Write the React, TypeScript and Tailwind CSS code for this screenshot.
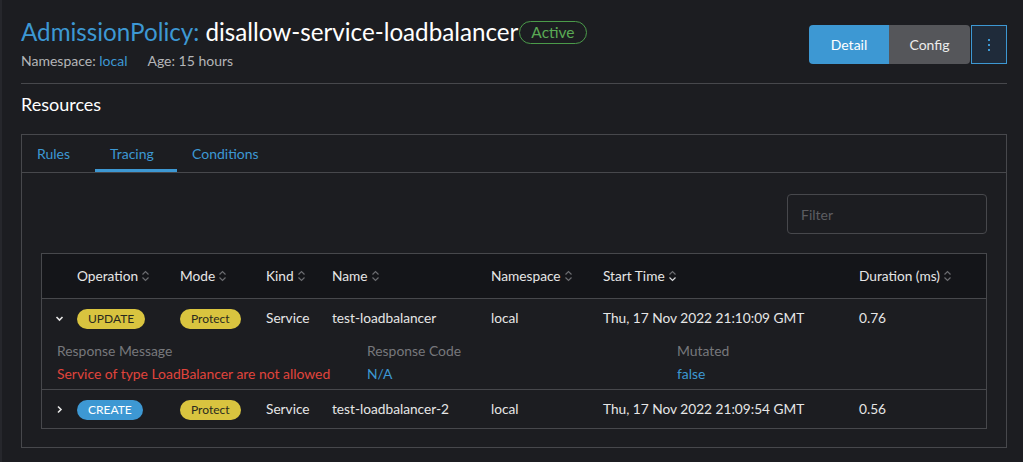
import type { ReactNode } from 'react'

const COLS = 'grid grid-cols-[35px_103px_86px_66px_159px_112px_256px_1fr] items-center'

function SortIcon({ active }: { active?: boolean }) {
  return (
    <svg width="9" height="12" viewBox="0 0 9 12" className="ml-[3px] inline-block" fill="none" strokeWidth="1.2">
      <path d="M1.5 4.5 L4.5 1.5 L7.5 4.5" stroke="#6b6c70" />
      <path d="M1.5 7.5 L4.5 10.5 L7.5 7.5" stroke={active ? '#d8d9db' : '#6b6c70'} />
    </svg>
  )
}

function Th({ children, active }: { children: ReactNode; active?: boolean }) {
  return (
    <div className="flex items-center text-[13.7px] text-[#e6e6e6]">
      {children}
      <SortIcon active={active} />
    </div>
  )
}

function Badge({ children, tone }: { children: ReactNode; tone: 'yellow' | 'blue' }) {
  return (
    <span
      className={
        tone === 'yellow'
          ? 'inline-flex h-[20px] items-center rounded-full bg-[#d9c43f] px-[11px] text-[12px] text-[#2a2a1e]'
          : 'inline-flex h-[20px] items-center rounded-full bg-[#3d98d3] px-[11px] text-[12px] text-white'
      }
    >
      {children}
    </span>
  )
}

function Chevron({ open }: { open?: boolean }) {
  return (
    <svg width="9" height="9" viewBox="0 0 9 9" fill="none" stroke="#e6e6e6" strokeWidth="1.6" className="ml-[13px]">
      {open ? <path d="M1.5 3 L4.5 6 L7.5 3" /> : <path d="M3 1.5 L6 4.5 L3 7.5" />}
    </svg>
  )
}

interface Trace {
  operation: string
  tone: 'yellow' | 'blue'
  name: string
  start: string
  duration: string
  open?: boolean
}

const traces: Trace[] = [
  { operation: 'UPDATE', tone: 'yellow', name: 'test-loadbalancer', start: 'Thu, 17 Nov 2022 21:10:09 GMT', duration: '0.76', open: true },
  { operation: 'CREATE', tone: 'blue', name: 'test-loadbalancer-2', start: 'Thu, 17 Nov 2022 21:09:54 GMT', duration: '0.56' },
]

export default function App() {
  return (
    <div
      className="h-[462px] w-[1023px] overflow-hidden border-l-2 border-[#26272c] bg-[#1c1d21] text-[#e6e6e6]"
      style={{ fontFamily: 'Lato, "Open Sans", sans-serif' }}
    >
      <div className="pl-[19px] pr-[16px]">
        <div className="flex items-start justify-between pt-[17px]">
          <div>
            <div className="flex items-center">
              <h1 className="text-[24.2px] leading-[30px]">
                <span className="text-[#3d98d3]">AdmissionPolicy:</span>{' '}
                <span className="text-white">disallow-service-loadbalancer</span>
              </h1>
              <span className="ml-[1px] mt-[1px] inline-flex h-[23px] items-center rounded-full border border-[#4b9b4a] px-[11px] text-[15.5px] text-[#5aaa55]">
                Active
              </span>
            </div>
            <div className="mt-[3px] flex text-[14px] text-[#b4b5b8]">
              <span>
                Namespace: <span className="text-[#3d98d3]">local</span>
              </span>
              <span className="ml-[20px]">Age: 15 hours</span>
            </div>
          </div>
          <div className="mt-[8px] flex">
            <button className="h-[39px] w-[80px] rounded-l-[4px] bg-[#3d98d3] text-[14px] text-white">Detail</button>
            <button className="h-[39px] w-[81px] rounded-r-[4px] bg-[#55565a] text-[14px] text-[#ececec]">Config</button>
            <button className="ml-[1px] flex h-[39px] w-[36px] items-center justify-center border border-[#3d98d3] bg-[#1f2b3a]">
              <svg width="4" height="14" viewBox="0 0 4 14" fill="#3d98d3">
                <rect x="1" y="1" width="2" height="2" />
                <rect x="1" y="6" width="2" height="2" />
                <rect x="1" y="11" width="2" height="2" />
              </svg>
            </button>
          </div>
        </div>

        <div className="mt-[12px] h-px bg-[#47484c]" />

        <h2 className="mt-[8px] text-[18px] leading-[24px] text-white">Resources</h2>

        <div className="mt-[18px] border border-[#47484c]">
          <div className="flex h-[38px] border-b border-[#47484c] text-[14px] text-[#3d98d3]">
            <div className="flex w-[73px] items-center pl-[15px]">Rules</div>
            <div className="flex w-[82px] items-center border-b-[3px] border-[#3d98d3] pl-[15px] pt-[3px]">Tracing</div>
            <div className="flex items-center pl-[15px]">Conditions</div>
          </div>

          <div className="px-[19px] pb-[18px] pt-[21px]">
            <div className="flex justify-end">
              <input
                placeholder="Filter"
                className="h-[40px] w-[200px] rounded-[4px] border border-[#47484c] bg-transparent px-[13px] text-[14px] text-white placeholder:text-[#5c5d61] outline-none"
              />
            </div>

            <div className="mt-[19px] border border-[#47484c]">
              <div className={`${COLS} h-[45px] border-b border-[#47484c] bg-[#141519]`}>
                <div />
                <Th>Operation</Th>
                <Th>Mode</Th>
                <Th>Kind</Th>
                <Th>Name</Th>
                <Th>Namespace</Th>
                <Th active>Start Time</Th>
                <Th>Duration (ms)</Th>
              </div>
              {traces.map((t, i) => (
                <div key={t.name} className={i > 0 ? 'border-t border-[#47484c]' : ''}>
                  <div className={`${COLS} h-[38px] text-[13.7px] text-[#e6e6e6]`}>
                    <Chevron open={t.open} />
                    <div>
                      <Badge tone={t.tone}>{t.operation}</Badge>
                    </div>
                    <div>
                      <Badge tone="yellow">Protect</Badge>
                    </div>
                    <div>Service</div>
                    <div>{t.name}</div>
                    <div>local</div>
                    <div>{t.start}</div>
                    <div>{t.duration}</div>
                  </div>
                  {t.open && (
                    <div className="grid h-[52px] grid-cols-[310px_310px_1fr] pl-[15px] pt-[2px] text-[13.9px] leading-[23px]">
                      <div>
                        <div className="text-[#77787c]">Response Message</div>
                        <div className="text-[#e0443c]">Service of type LoadBalancer are not allowed</div>
                      </div>
                      <div>
                        <div className="text-[#77787c]">Response Code</div>
                        <div className="text-[#3d98d3]">N/A</div>
                      </div>
                      <div>
                        <div className="text-[#77787c]">Mutated</div>
                        <div className="text-[#3d98d3]">false</div>
                      </div>
                    </div>
                  )}
                </div>
              ))}
            </div>
          </div>
        </div>
      </div>
    </div>
  )
}
